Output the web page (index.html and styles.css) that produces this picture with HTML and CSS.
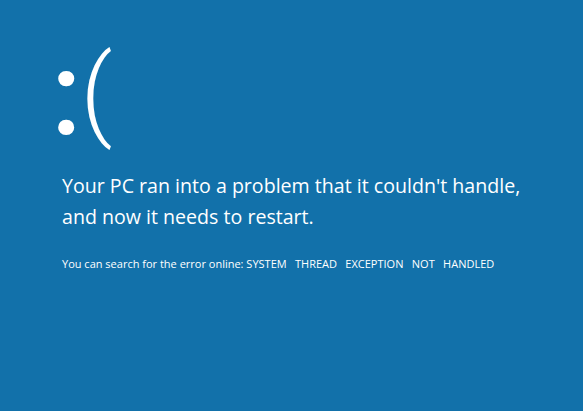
FILE: index.html
```html
<!DOCTYPE html>
<html lang="en">
<head>
    <meta charset="UTF-8">
    <title>Stop Error</title>
    <link rel="stylesheet" href="styles.css">
</head>
<body>
    <div class="screen">
        <div class="face"><span class="colon">:</span><span class="paren">(</span></div>
        <p class="message">Your PC ran into a problem that it couldn't handle,<br>and now it needs to restart.</p>
        <p class="details">You can search for the error online: <span class="code">SYSTEM THREAD EXCEPTION NOT HANDLED</span></p>
    </div>
</body>
</html>
```

FILE: styles.css
```css
html, body {
    margin: 0;
    height: 100%;
    background-color: #1271aa;
}

.screen {
    color: white;
    font-family: "Open Sans", "Noto Sans", sans-serif;
    padding: 36px 0 0 62px;
}

/* sad face */
.face {
    display: flex;
    align-items: flex-start;
    margin-left: -11px;
    font-family: Roboto, "Open Sans", sans-serif;
}

.colon {
    font-size: 116px;
    font-weight: 500;
    line-height: 1;
}

.paren {
    font-size: 100px;
    font-weight: 300;
    line-height: 1;
    margin: 7px 0 0 -1px;
}

.message {
    font-size: 19.6px;
    line-height: 31px;
    margin: 18px 0 0 0;
}

.details {
    font-size: 11px;
    margin: 24px 0 0 0;
}

.code {
    word-spacing: 5.5px;
}
```
